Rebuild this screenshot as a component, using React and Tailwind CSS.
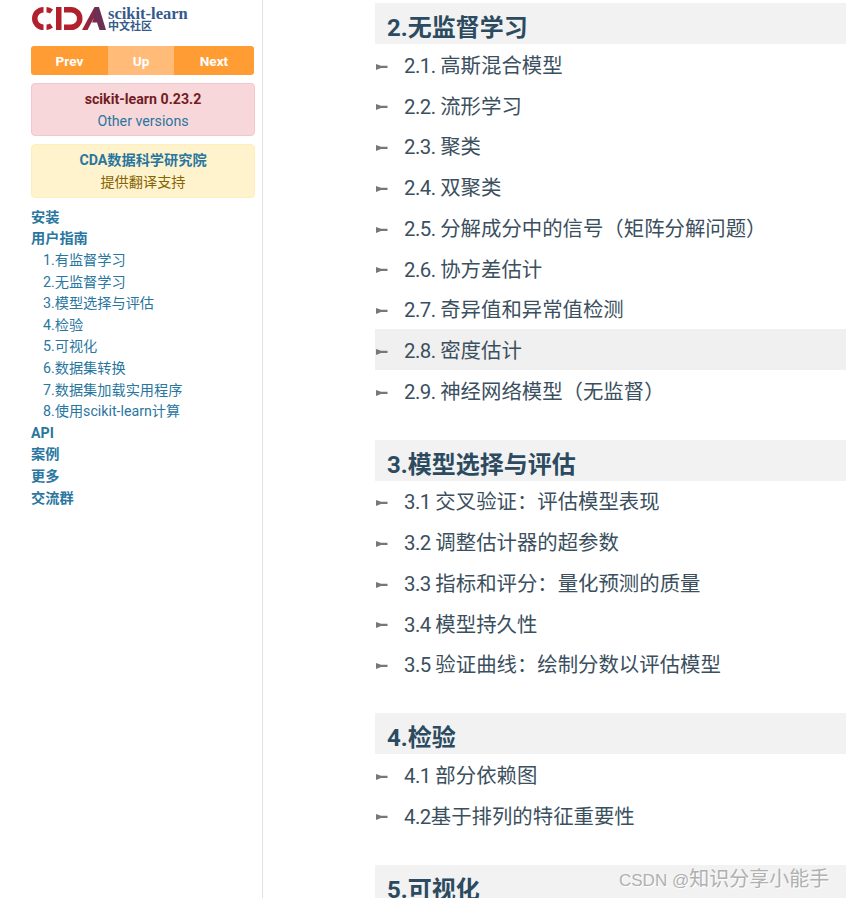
const font = { fontFamily: 'Roboto, "Noto Sans CJK SC", sans-serif' };

const sections = [
  {
    title: "2.无监督学习",
    items: [
      "2.1. 高斯混合模型",
      "2.2. 流形学习",
      "2.3. 聚类",
      "2.4. 双聚类",
      "2.5. 分解成分中的信号（矩阵分解问题）",
      "2.6. 协方差估计",
      "2.7. 奇异值和异常值检测",
      "2.8. 密度估计",
      "2.9. 神经网络模型（无监督）",
    ],
  },
  {
    title: "3.模型选择与评估",
    items: [
      "3.1 交叉验证：评估模型表现",
      "3.2 调整估计器的超参数",
      "3.3 指标和评分：量化预测的质量",
      "3.4 模型持久性",
      "3.5 验证曲线：绘制分数以评估模型",
    ],
  },
  { title: "4.检验", items: ["4.1 部分依赖图", "4.2基于排列的特征重要性"] },
  { title: "5.可视化", items: [] },
];

const guide = [
  "1.有监督学习",
  "2.无监督学习",
  "3.模型选择与评估",
  "4.检验",
  "5.可视化",
  "6.数据集转换",
  "7.数据集加载实用程序",
  "8.使用scikit-learn计算",
];

function Arrow() {
  return (
    <svg width="12" height="6" viewBox="0 0 12 6" className="shrink-0 ml-[1px] mt-[4px]">
      <path d="M0 0 L5 1.800 H11.500 V4 H5 L0 6 Z" fill="#777777" />
    </svg>
  );
}

function Logo() {
  return (
    <div className="flex items-start h-[27px] pl-[1px]">
      <svg width="74" height="23" viewBox="0 0 74 23" className="mt-[2px]">
        <defs>
          <linearGradient id="cda-a" x1="0" y1="0" x2="1" y2="0">
            <stop offset="0" stopColor="#b21f2d" />
            <stop offset="0.6" stopColor="#6d2f52" />
          </linearGradient>
        </defs>
        <path d="M11.500 0 A11.500 11.500 0 0 0 11.500 23 V17.500 A6 6 0 0 1 11.500 5.500 Z" fill="#b21f2d" />
        <path d="M14.500 0 A11.500 11.500 0 0 1 21 2.500 L18 6.500 A6 6 0 0 0 14.500 5.500 Z M14.500 17.500 A6 6 0 0 0 18 16.500 L21 20.500 A11.500 11.500 0 0 1 14.500 23 Z" fill="#b21f2d" />
        <rect x="24" y="0" width="5.500" height="23" fill="#b21f2d" />
        <path d="M32 0 H39 A11.500 11.500 0 0 1 39 23 H32 V17.500 H39 A6 6 0 0 0 39 5.500 H32 Z" fill="#b21f2d" />
        <path d="M50 23 L62.500 0 H67 L74 23 H67.500 L65 15.500 H60 L62 10.500 L55.500 23 Z" fill="url(#cda-a)" />
      </svg>
      <div className="ml-[2px] mt-[1px] flex flex-col text-[#34598a]" style={{ fontFamily: '"Liberation Serif", "Noto Sans CJK SC", serif' }}>
        <span className="text-[16.500px] leading-[15px] font-bold">scikit-learn</span>
        <span className="text-[11px] leading-[11px] font-bold">中文社区</span>
      </div>
    </div>
  );
}

function Sidebar() {
  return (
    <aside className="w-[263px] shrink-0 h-full border-r border-[#dee2e6] pl-[31px] pr-[7px] pt-[5px]">
      <Logo />
      <div className="mt-[14px] w-[223px] h-[29px] flex rounded-[3px] overflow-hidden text-white text-[13.600px] font-bold">
        <div className="w-[77px] pt-[1px] bg-[#ff9c34] flex items-center justify-center">Prev</div>
        <div className="w-[66px] pt-[1px] bg-[#ffbb77] flex items-center justify-center">Up</div>
        <div className="flex-1 pt-[1px] bg-[#ff9c34] flex items-center justify-center">Next</div>
      </div>
      <div className="mt-[8px] h-[53px] pt-[1px] rounded-[4px] border border-[#f5c6cb] bg-[#f8d7da] flex flex-col items-center justify-center text-[14.200px] leading-[22px]">
        <div className="font-bold text-[#721c24]">scikit-learn 0.23.2</div>
        <div className="text-[#29769f]">Other versions</div>
      </div>
      <div className="mt-[8px] h-[54px] rounded-[4px] border border-[#ffeeba] bg-[#fff3cd] flex flex-col items-center justify-center text-[14.200px] leading-[22px]">
        <div className="font-bold text-[#29769f]">CDA数据科学研究院</div>
        <div className="text-[#856404]">提供翻译支持</div>
      </div>
      <nav className="mt-[8.900px] text-[14.200px] leading-[21.600px] text-[#29769f]">
        <div className="font-bold">安装</div>
        <div className="font-bold">用户指南</div>
        {guide.map((g) => (
          <div key={g} className="pl-[12px]">{g}</div>
        ))}
        <div className="font-bold">API</div>
        <div className="font-bold">案例</div>
        <div className="font-bold">更多</div>
        <div className="font-bold">交流群</div>
      </nav>
    </aside>
  );
}

export default function App() {
  return (
    <div className="relative flex h-[898px] w-[846px] overflow-hidden bg-white" style={font}>
      <Sidebar />
      <main className="flex-1 pl-[112px] pt-[3.200px]">
        {sections.map((s) => (
          <section key={s.title} className="mb-[28.800px]">
            <h2 className="h-[41px] bg-[#f2f2f2] pl-[12px] text-[24px] leading-[50px] font-bold text-[#2c4a60] whitespace-nowrap">
              {s.title}
            </h2>
            <ul>
              {s.items.map((it) => {
                const num = it.match(/^[\d. ]+/)[0];
                return (
                  <li
                    key={it}
                    className={`h-[40.750px] flex items-center text-[20.400px] text-[#3b4f5e] whitespace-pre ${it.startsWith("2.8") ? "bg-[#f0f0f0]" : ""}`}
                  >
                    <Arrow />
                    <span className="ml-[16px] mt-[3px]">
                      <span className="tracking-[-0.5px]">{num}</span>
                      {it.slice(num.length)}
                    </span>
                  </li>
                );
              })}
            </ul>
          </section>
        ))}
      </main>
      <div
        className="absolute left-[619px] top-[865px] text-[20px] leading-[28px] text-[#b0b0b0] whitespace-nowrap [text-shadow:1px_1px_1px_#ffffff]"
        style={{ fontFamily: '"Liberation Sans", "Noto Sans CJK SC", sans-serif' }}
      >
        <span className="text-[17px]">CSDN @</span>知识分享小能手
      </div>
    </div>
  );
}
